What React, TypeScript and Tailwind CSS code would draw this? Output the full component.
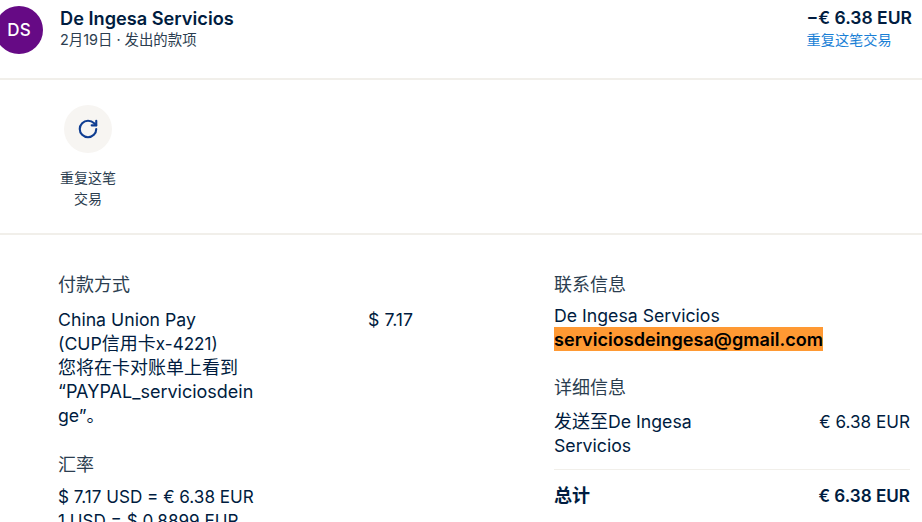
import { RotateCw } from "lucide-react";

const font = "font-['Inter','Noto_Sans_CJK_SC',sans-serif]";

function Zh({ children }: { children: string }) {
  return <span className="text-[18px]">{children}</span>;
}

export default function App() {
  return (
    <div className={`${font} h-[522px] w-[922px] overflow-hidden bg-white text-[17.7px] leading-[24px] text-[#001c40]`}>
      {/* Header */}
      <div className="flex h-[77.5px] items-start pr-[10px] pt-[6px]">
        <div className="ml-[-5px] flex h-[48px] w-[48px] shrink-0 items-center justify-center rounded-full bg-[#660a85] text-[17px] font-medium text-white">
          DS
        </div>
        <div className="ml-[17px] flex-1">
          <div className="text-[18.2px] font-semibold leading-[24px]">De Ingesa Servicios</div>
          <div className="text-[14.4px] leading-[20px] text-[#2c3e50]">2月19日&nbsp;·&nbsp;发出的款项</div>
        </div>
        <div>
          <div className="text-[17.5px] font-semibold leading-[24px]">−€ 6.38 EUR</div>
          <div className="text-[14.2px] leading-[20px] text-[#1a7fd6]">重复这笔交易</div>
        </div>
      </div>
      <div className="h-[2px] bg-[#f1efea]" />

      {/* Actions */}
      <div className="flex h-[153.5px] flex-col pl-[58px] pt-[25.5px]">
        <div className="flex w-[60px] flex-col items-center">
          <div className="flex h-[48px] w-[48px] items-center justify-center rounded-full bg-[#f7f5f2]">
            <RotateCw className="h-[22px] w-[22px] text-[#0f3d91]" strokeWidth={2.3} />
          </div>
          <div className="mt-[14px] text-center text-[14px] leading-[21px] text-[#2c3e50]">
            重复这笔
            <br />
            交易
          </div>
        </div>
      </div>
      <div className="h-[2px] bg-[#f1efea]" />

      {/* Details */}
      <div className="flex pl-[58px] pr-[12px] pt-[38px]">
        <div className="w-[355px] shrink-0">
          <div className="text-[18px] text-[#2c3e50]">付款方式</div>
          <div className="mt-[11px] flex justify-between">
            <div className="w-[197px]">
              China Union Pay
              <br />
              (CUP<Zh>信用卡</Zh><span className="text-[17.1px]">x-4221)</span>
              <br />
              <Zh>您将在卡对账单上看到</Zh>
              <br />
              <span className="text-[18px]">“PAYPAL_serviciosdein</span>
              <br />
              ge”<Zh>。</Zh>
            </div>
            <div>$ 7.17</div>
          </div>
          <div className="mt-[25px] text-[18px] text-[#2c3e50]">汇率</div>
          <div className="mt-[8px] whitespace-nowrap text-[17.1px]">
            $ 7.17 USD = € 6.38 EUR
            <br />1 USD = $ 0.8899 EUR
          </div>
        </div>

        <div className="ml-[141px] flex-1">
          <div className="text-[18px] text-[#2c3e50]">联系信息</div>
          <div className="mt-[7px]">De Ingesa Servicios</div>
          <div className="mt-[-1px]">
            <span className="inline-block bg-[#ff9933] text-[18.1px] font-semibold text-black">serviciosdeingesa@gmail.com</span>
          </div>
          <div className="mt-[24px] text-[18px] text-[#2c3e50]">详细信息</div>
          <div className="mt-[10px] flex justify-between">
            <div className="w-[170px]"><Zh>发送至</Zh>De Ingesa Servicios</div>
            <div className="text-[17.1px]">€ 6.38 EUR</div>
          </div>
          <div className="mt-[11px] h-px bg-[#f1efea]" />
          <div className="mt-[14px] flex justify-between font-semibold">
            <div><Zh>总计</Zh></div>
            <div className="text-[17.1px]">€ 6.38 EUR</div>
          </div>
        </div>
      </div>
    </div>
  );
}
